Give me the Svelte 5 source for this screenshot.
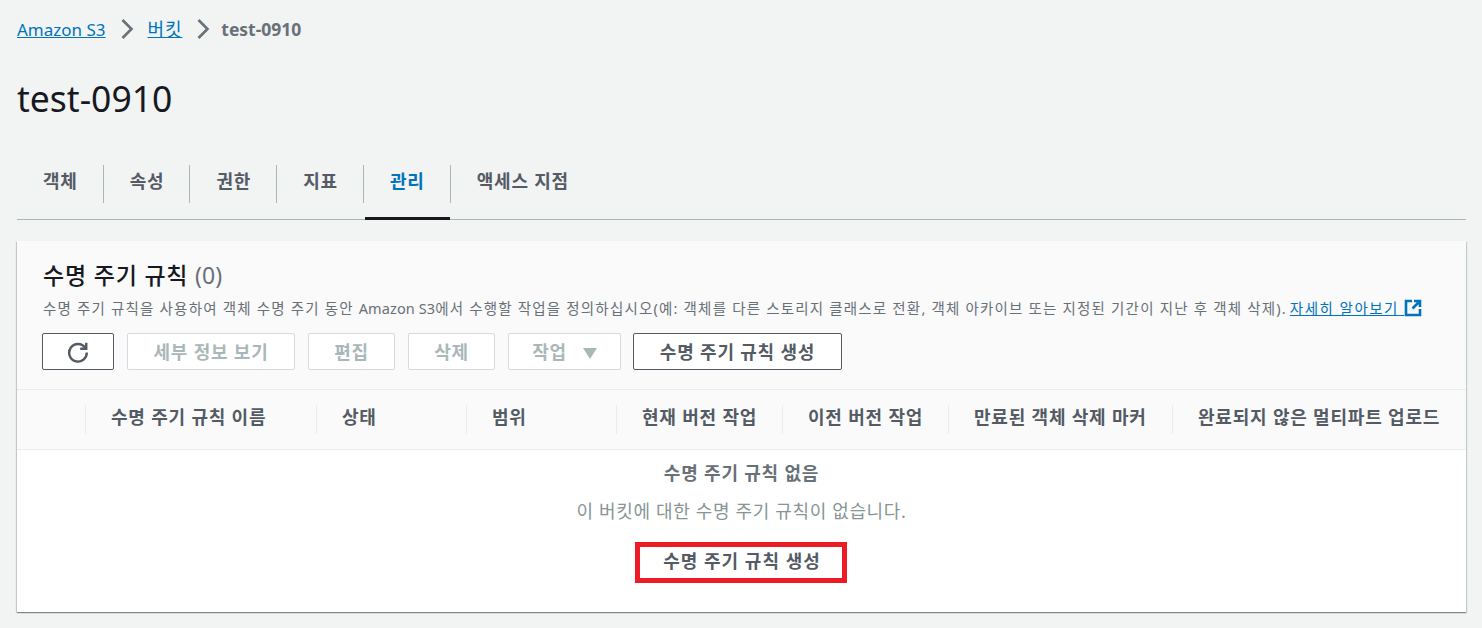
<script>
  const tabs = ['객체', '속성', '권한', '지표', '관리', '액세스 지점'];
  const active = 4;
  const columns = ['', '수명 주기 규칙 이름', '상태', '범위', '현재 버전 작업', '이전 버전 작업', '만료된 객체 삭제 마커', '완료되지 않은 멀티파트 업로드'];
</script>

<div class="page">
  <nav class="crumbs">
    <a href="#s3">Amazon S3</a>
    <svg class="chevron" viewBox="0 0 16 22" width="16" height="22"><path d="M2.5 2 11.5 11l-9 9" /></svg>
    <a href="#buckets" class="crumbs__ko">버킷</a>
    <svg class="chevron" viewBox="0 0 16 22" width="16" height="22"><path d="M2.5 2 11.5 11l-9 9" /></svg>
    <span class="current">test-0910</span>
  </nav>

  <h1>test-0910</h1>

  <div class="tabs">
    {#each tabs as tab, i}
      <div class="tab" class:tab--active={i === active}>
        <span class="tab__label">{tab}</span>
      </div>
    {/each}
  </div>

  <section class="card">
    <header class="card__head">
      <h2>수명 주기 규칙 <span class="count">(0)</span></h2>
      <p class="desc">
        수명 주기 규칙을 사용하여 객체 수명 주기 동안 <span class="latin">Amazon S3</span>에서 수행할 작업을 정의하십시오(예: 객체를 다른 스토리지 클래스로 전환, 객체 아카이브 또는 지정된 기간이 지난 후 객체 삭제).
        <a href="#more">자세히 알아보기 <svg class="ext" viewBox="0 0 18 18" width="18" height="18"><path d="M8 2H2v14h14v-6" /><path d="M10 2h6v6M16 2 8.5 9.5" /></svg></a>
      </p>
      <div class="actions">
        <button class="btn btn--refresh" aria-label="새로 고침">
          <svg viewBox="0 0 20 20" width="22" height="22"><path d="M16.6 6.2A8 8 0 1 0 18 10.5" /><path d="M17.5 1.5v5.5H12" /></svg>
        </button>
        <button class="btn btn--off btn--details">세부 정보 보기</button>
        <button class="btn btn--off btn--small">편집</button>
        <button class="btn btn--off btn--small">삭제</button>
        <button class="btn btn--off btn--menu">작업 <i class="caret"></i></button>
        <button class="btn btn--create">수명 주기 규칙 생성</button>
      </div>
    </header>

    <div class="thead">
      {#each columns as col}
        <div class="th"><span>{col}</span></div>
      {/each}
    </div>

    <div class="empty">
      <strong>수명 주기 규칙 없음</strong>
      <p>이 버킷에 대한 수명 주기 규칙이 없습니다.</p>
      <div class="mark">수명 주기 규칙 생성</div>
    </div>
  </section>
</div>

<style>
:global(body) {
  margin: 0;
  background: #f2f3f3;
}

.page {
  height: 628px;
  box-sizing: border-box;
  padding: 16px 16px 0 17px;
  background: #f2f3f3;
  font-family: "Noto Sans", "Noto Sans CJK KR", sans-serif;
  color: #545b64;
  overflow: hidden;
}

a {
  color: #0073bb;
  text-decoration: underline;
}

.crumbs {
  display: flex;
  align-items: center;
  height: 26px;
  font-size: 17px;
}

.crumbs__ko {
  font-size: 18px;
  letter-spacing: 0.8px;
  margin: -2px 0 0 2px;
}

.chevron {
  margin: 0 10px 0 14px;
  fill: none;
  stroke: #687078;
  stroke-width: 2.6;
}

.current {
  margin-left: -1px;
  font-weight: 700;
  font-size: 17.5px;
  color: #687078;
}

h1 {
  margin: 34px 0 0;
  height: 44px;
  font-size: 35.5px;
  line-height: 44px;
  font-weight: 400;
  color: #16191f;
}

.tabs {
  display: flex;
  margin-top: 41px;
  height: 58px;
  border-bottom: 1px solid #aab7b8;
}

.tab {
  position: relative;
  height: 58px;
  box-sizing: border-box;
  padding: 4px 0 0;
  font-size: 18px;
  letter-spacing: 0.8px;
  font-weight: 700;
  color: #545b64;
}

.tab__label {
  display: block;
  height: 38px;
  line-height: 33px;
  padding: 0 25px 0 26px;
  border-right: 1px solid #aab7b8;
}

.tab:last-child .tab__label {
  border-right: 0;
}

.tab--active {
  color: #0073bb;
}

.tab--active::after {
  content: "";
  position: absolute;
  left: 1px;
  right: 1px;
  bottom: -1px;
  height: 3px;
  background: #16191f;
}

.card {
  margin-top: 21px;
  width: 1449px;
  height: 371px;
  display: flex;
  flex-direction: column;
  background: #fff;
  box-shadow: 0 1px 1px 0 rgba(0, 28, 36, 0.3), 1px 1px 1px 0 rgba(0, 28, 36, 0.15), -1px 1px 1px 0 rgba(0, 28, 36, 0.15);
}

.card__head {
  height: 149px;
  box-sizing: border-box;
  padding: 16px 25px 0;
  background: #fafafa;
  border-bottom: 1px solid #eaeded;
}

h2 {
  margin: 0;
  padding-left: 1px;
  height: 36px;
  font-size: 23px;
  letter-spacing: 0.8px;
  line-height: 36px;
  font-weight: 500;
  color: #16191f;
}

.count {
  font-weight: 400;
  letter-spacing: 0;
  color: #687078;
}

.desc {
  margin: 3px 0 0;
  padding-left: 1px;
  height: 24px;
  font-size: 14.5px;
  letter-spacing: 1.19px;
  line-height: 24px;
  color: #687078;
  white-space: nowrap;
}

.latin {
  letter-spacing: 0.1px;
}

.desc a {
  margin-left: -2px;
  letter-spacing: 1.5px;
}

.ext {
  width: 18px;
  height: 18px;
  vertical-align: -3px;
  fill: none;
  stroke: #0073bb;
  stroke-width: 2.6;
}

.actions {
  display: flex;
  gap: 13px;
  margin-top: 13px;
}

.btn {
  height: 37px;
  padding: 0 0 2px;
  box-sizing: border-box;
  border-radius: 2px;
  background: #fff;
  font: 700 18px "Noto Sans", "Noto Sans CJK KR", sans-serif;
  letter-spacing: 0.8px;
  display: flex;
  align-items: center;
  justify-content: center;
}

.btn--off {
  border: 1px solid #d5dbdb;
  color: #aab7b8;
}

.btn--refresh {
  width: 72px;
  padding: 0;
  border: 1px solid #545b64;
}

.btn--refresh svg {
  fill: none;
  stroke: #545b64;
  stroke-width: 2.2;
}

.btn--details { width: 168px; }
.btn--small { width: 87px; }
.btn--menu { width: 113px; gap: 16px; }

.btn--create {
  width: 209px;
  margin-left: -1px;
  border: 1px solid #545b64;
  color: #545b64;
}

.caret {
  width: 0;
  height: 0;
  margin-top: 5px;
  border-left: 7px solid transparent;
  border-right: 7px solid transparent;
  border-top: 11px solid #aab7b8;
}

.thead {
  height: 60px;
  box-sizing: border-box;
  display: grid;
  grid-template-columns: 68px 231px 150px 150px 166px 166px 224px 1fr;
  align-items: center;
  background: #fafafa;
  border-bottom: 1px solid #eaeded;
  font-size: 18px;
  letter-spacing: 0.8px;
  font-weight: 700;
  color: #545b64;
}

.th {
  height: 29px;
  line-height: 24px;
  padding-left: 25px;
  border-left: 1px solid #eaeded;
  white-space: nowrap;
}

.th:first-child {
  border-left: 0;
}

.empty {
  flex: 1;
  display: flex;
  flex-direction: column;
  align-items: center;
  text-align: center;
}

.empty strong {
  margin-top: 10px;
  height: 26px;
  font-size: 18px;
  letter-spacing: 0.8px;
  line-height: 26px;
  color: #687078;
}

.empty p {
  margin: 12px 0 0;
  height: 26px;
  font-size: 18px;
  letter-spacing: 0.65px;
  line-height: 26px;
  color: #879596;
}

.mark {
  margin-top: 18px;
  margin-left: -2px;
  width: 212px;
  height: 41px;
  box-sizing: border-box;
  border: 5px solid #ed1c24;
  padding-left: 3px;
  font-size: 18px;
  letter-spacing: 1px;
  font-weight: 700;
  line-height: 29px;
  color: #545b64;
}
</style>
